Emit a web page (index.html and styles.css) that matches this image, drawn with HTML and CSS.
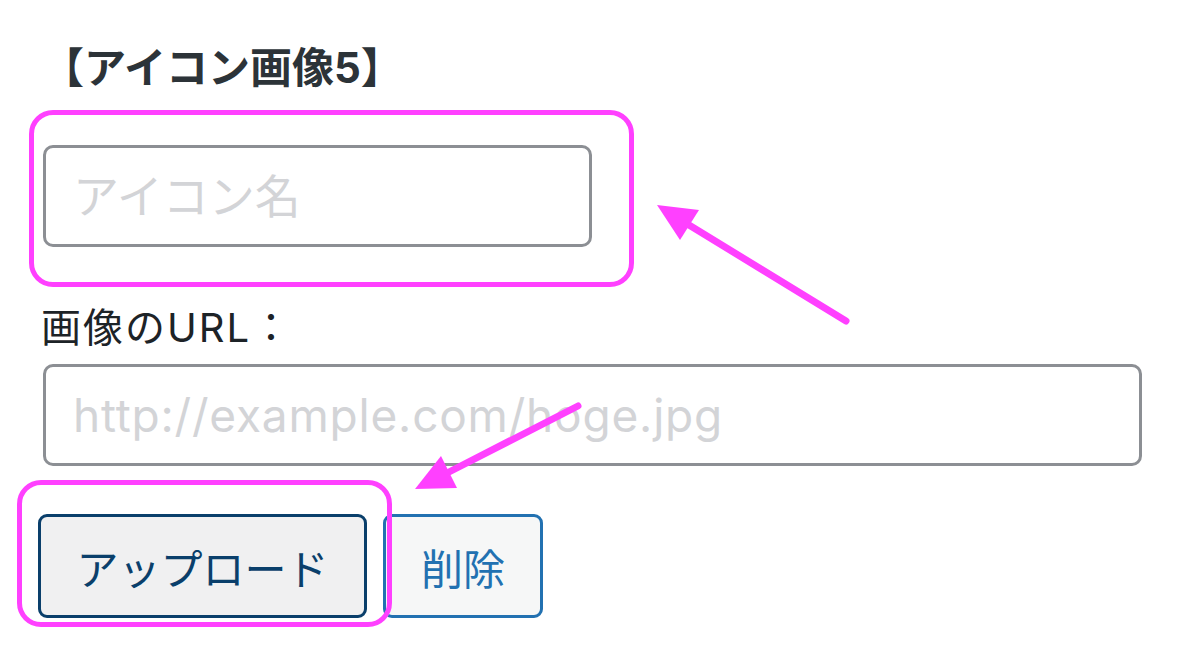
FILE: index.html
```html
<!DOCTYPE html>
<html lang="ja">
<head>
  <meta charset="UTF-8">
  <meta name="viewport" content="width=device-width, initial-scale=1.0">
  <title>アイコン画像5</title>
  <link rel="stylesheet" href="styles.css">
</head>
<body>
  <main class="panel">
    <p class="title">【アイコン画像5】</p>
    <input type="text" class="field field-name" placeholder="アイコン名">
    <label class="label" for="icon-url">画像のURL：</label>
    <input type="text" id="icon-url" class="field field-url" placeholder="http://example.com/hoge.jpg">
    <div class="actions">
      <button type="button" class="btn btn-upload">アップロード</button>
      <button type="button" class="btn btn-delete">削除</button>
    </div>
  </main>

  <!-- 注釈（枠と矢印） -->
  <div class="note note-name"></div>
  <div class="note note-upload"></div>
  <svg class="arrows" viewBox="0 0 1200 646" width="1200" height="646">
    <line x1="846" y1="321" x2="689" y2="225" />
    <polygon points="657,205 699,210 680,240" />
    <line x1="578" y1="406" x2="449" y2="472" />
    <polygon points="415,489 457,488 441,456" />
  </svg>
</body>
</html>
```

FILE: styles.css
```css
body {
  margin: 0;
  background: #fff;
  font-family: Inter, "Noto Sans CJK JP", sans-serif;
  color: #1d2327;
}
.panel {
  display: flex;
  flex-direction: column;
  align-items: flex-start;
  padding: 47px 0 0 43px;
}
.title {
  margin: 0;
  font-size: 42px;
  line-height: 1;
  font-weight: 700;
  color: #2c3338;
  margin-left: -1px;
}
.field {
  box-sizing: border-box;
  height: 102px;
  border: 3px solid #8c8f94;
  border-radius: 10px;
  background: #fff;
  padding: 0 0 0 27px;
  font-family: Inter, "Noto Sans CJK JP", sans-serif;
  font-size: 46px;
  color: #2c3338;
  outline: none;
}
.field::placeholder {
  color: #d3d4d7;
}
.field-name {
  width: 549px;
  margin-top: 56px;
}
.label {
  margin-top: 61px;
  font-size: 40px;
  line-height: 1;
  letter-spacing: 2px;
  margin-left: -2px;
}
.field-url {
  width: 1099px;
  margin-top: 16px;
  letter-spacing: 0.8px;
}
.actions {
  display: flex;
  gap: 16px;
  margin: 48px 0 0 -5px;
}
.btn {
  box-sizing: border-box;
  height: 104px;
  padding: 0 38px;
  border: 3px solid #2271b1;
  border-radius: 9px;
  background: #f6f7f7;
  color: #2271b1;
  font-family: Inter, "Noto Sans CJK JP", sans-serif;
  font-size: 42px;
  cursor: pointer;
}
.btn-upload {
  width: 329px;
  padding: 0;
  border-color: #0a3f6b;
  background: #f0f0f1;
  color: #0a3f6b;
}
.btn-delete {
  width: 160px;
  padding: 0;
}

/* annotations */
.note {
  position: absolute;
  box-sizing: border-box;
  border: 5px solid #ff40ff;
  border-radius: 24px;
}
.note-name {
  left: 29px;
  top: 110px;
  width: 605px;
  height: 177px;
}
.note-upload {
  left: 17px;
  top: 480px;
  width: 375px;
  height: 147px;
}
.arrows {
  position: absolute;
  left: 0;
  top: 0;
  pointer-events: none;
}
.arrows line {
  stroke: #ff40ff;
  stroke-width: 7;
  stroke-linecap: round;
}
.arrows polygon {
  fill: #ff40ff;
}
```
